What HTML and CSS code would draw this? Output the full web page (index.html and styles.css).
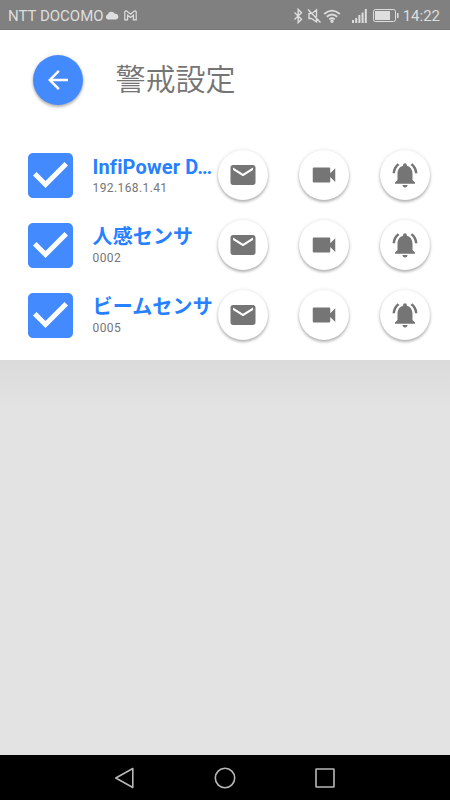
FILE: index.html
```html
<!DOCTYPE html>
<html lang="ja">
<head>
    <meta charset="UTF-8">
    <meta name="viewport" content="width=device-width, initial-scale=1.0">
    <title>警戒設定</title>
    <link rel="stylesheet" href="styles.css">
</head>
<body>
    <!-- Shared icons -->
    <svg class="icon-defs">
        <symbol id="icon-check" viewBox="3 3 18 18">
            <path d="M19 3H5c-1.11 0-2 .9-2 2v14c0 1.1.89 2 2 2h14c1.11 0 2-.9 2-2V5c0-1.1-.89-2-2-2zm-9 14l-5-5 1.41-1.41L10 14.17l7.59-7.59L19 8l-9 9z"/>
        </symbol>
        <symbol id="icon-mail" viewBox="0 0 24 24">
            <path d="M20 4H4c-1.1 0-1.99.9-1.99 2L2 18c0 1.1.9 2 2 2h16c1.1 0 2-.9 2-2V6c0-1.1-.9-2-2-2zm0 4l-8 5-8-5V6l8 5 8-5v2z"/>
        </symbol>
        <symbol id="icon-video" viewBox="0 0 24 24">
            <path d="M17 10.500V7c0-.55-.45-1-1-1H4c-.55 0-1 .45-1 1v10c0 .55.45 1 1 1h12c.55 0 1-.45 1-1v-3.500l4 4v-11l-4 4z"/>
        </symbol>
        <symbol id="icon-bell" viewBox="0 0 24 24">
            <path d="M7.580 4.080L6.150 2.650C3.750 4.480 2.170 7.300 2.030 10.500h2c.15-2.650 1.510-4.970 3.550-6.420zM19.970 10.500h2c-.15-3.200-1.730-6.020-4.120-7.850l-1.420 1.430c2.020 1.450 3.390 3.770 3.540 6.420zM18 11c0-3.070-1.640-5.640-4.500-6.320V4c0-.83-.67-1.500-1.500-1.500s-1.500.67-1.500 1.500v.68C7.630 5.360 6 7.920 6 11v5l-2 2v1h16v-1l-2-2v-5zM12 22c.14 0 .27-.01.4-.04.65-.14 1.180-.58 1.440-1.180.1-.24.15-.5.15-.78h-4c.01 1.100.9 2 2.010 2z"/>
        </symbol>
    </svg>

    <div class="status-bar">
        <span>NTT DOCOMO</span>
        <svg class="cloud" width="14" height="9" viewBox="0 0 14 9">
            <path d="M3 8.500A2.500 2.500 0 0 1 2.700 3.600 3.800 3.800 0 0 1 9.800 2.800 2.900 2.900 0 1 1 11 8.500z"/>
        </svg>
        <svg class="gmail" width="13" height="11" viewBox="0 0 13 11">
            <path d="M.8 1.600Q2 .2 3 1.300L6.500 4.200 10 1.300Q11 .2 12.200 1.600V9.800H9.400V5.200L6.500 7.500 3.600 5.200V9.800H.8z"/>
        </svg>
        <div class="status-right">
            <svg width="50" height="16" viewBox="0 0 50 16" class="line-icons">
                <path d="M2.500 4.500L9.500 11.300 6.200 14.600V1.400L9.500 4.700 2.500 11.500"/>
                <path d="M16 1.500L28.500 14.500M17 5V10.500H19.500L24.500 14V10.500M20.500 5L24.500 2V9M17 5.500H19.500"/>
                <path class="wifi" d="M32.200 6Q40 -.8 47.800 6M34.800 8.800Q40 4.300 45.200 8.800M37.300 11.400Q40 9.200 42.700 11.400"/>
                <circle cx="40" cy="13.200" r="1"/>
            </svg>
            <svg class="signal" width="15" height="14" viewBox="0 0 15 14">
                <path d="M0 11h2v3H0zM3.200 9h2v5h-2zM6.400 6h2v8h-2zM9.600 3.500h2V14h-2zM12.800 0h2v14h-2z"/>
            </svg>
            <svg class="battery" width="26" height="13" viewBox="0 0 26 13">
                <rect x=".5" y=".5" width="22" height="12" rx="2" class="battery-case"/>
                <path d="M2 2h15v9H2zM24 4h1.500v5H24z"/>
            </svg>
            <span>14:22</span>
        </div>
    </div>

    <main>
        <header>
            <button class="round-button back" aria-label="戻る">
                <svg viewBox="0 0 24 24"><path d="M20 11H7.830l5.590-5.590L12 4l-8 8 8 8 1.410-1.410L7.830 13H20v-2z"/></svg>
            </button>
            <h1>警戒設定</h1>
        </header>

        <div class="device">
            <svg class="checkbox"><use href="#icon-check"/></svg>
            <div class="device-info">
                <h2>InfiPower D…</h2>
                <p>192.168.1.41</p>
            </div>
            <div class="actions">
                <button class="round-button"><svg><use href="#icon-mail"/></svg></button>
                <button class="round-button"><svg><use href="#icon-video"/></svg></button>
                <button class="round-button"><svg><use href="#icon-bell"/></svg></button>
            </div>
        </div>
        <div class="device">
            <svg class="checkbox"><use href="#icon-check"/></svg>
            <div class="device-info">
                <h2>人感センサ</h2>
                <p>0002</p>
            </div>
            <div class="actions">
                <button class="round-button"><svg><use href="#icon-mail"/></svg></button>
                <button class="round-button"><svg><use href="#icon-video"/></svg></button>
                <button class="round-button"><svg><use href="#icon-bell"/></svg></button>
            </div>
        </div>
        <div class="device">
            <svg class="checkbox"><use href="#icon-check"/></svg>
            <div class="device-info">
                <h2>ビームセンサ</h2>
                <p>0005</p>
            </div>
            <div class="actions">
                <button class="round-button"><svg><use href="#icon-mail"/></svg></button>
                <button class="round-button"><svg><use href="#icon-video"/></svg></button>
                <button class="round-button"><svg><use href="#icon-bell"/></svg></button>
            </div>
        </div>
    </main>

    <nav class="nav-bar">
        <svg viewBox="0 0 24 24"><path d="M19.800 2.500V21.500L2.800 12z"/></svg>
        <svg viewBox="0 0 24 24"><circle cx="12" cy="12" r="9.700"/></svg>
        <svg viewBox="0 0 24 24"><rect x="3" y="3" width="18" height="18" rx=".5"/></svg>
    </nav>
</body>
</html>
```
FILE: styles.css
```css
* {
    box-sizing: border-box;
}
body {
    font-family: Roboto, "Noto Sans CJK JP", sans-serif;
    margin: 0;
    height: 100vh;
    display: flex;
    flex-direction: column;
    overflow: hidden;
    background-color: #e3e3e3;
}
h1, h2, p {
    margin: 0;
}
.icon-defs {
    display: none;
}
.status-bar {
    height: 30px;
    padding: 2px 10px 0 8px;
    flex: none;
    display: flex;
    align-items: center;
    background-color: #808080;
    border-bottom: 1px solid #757575;
    color: #dedede;
    fill: #dedede;
    font-size: 15px;
}
.cloud {
    margin: 0 0 1px 1px;
}
.gmail {
    margin-left: 5px;
    fill: none;
    stroke: #dedede;
    stroke-width: 1.2;
}
.status-right {
    margin-left: auto;
    display: flex;
    align-items: center;
}
.line-icons {
    fill: none;
    stroke: #dedede;
    stroke-width: 1.4;
}
.wifi {
    stroke-width: 1.8;
}
.signal {
    margin-left: 10px;
}
.battery {
    margin: 0 4px 0 6px;
}
.battery-case {
    fill: none;
    stroke: #dedede;
}
main {
    height: 330px;
    flex: none;
    background-color: white;
}
/* soft shade under the list */
main::after {
    content: "";
    display: block;
    height: 50px;
    margin-top: 10px;
    background: linear-gradient(#dbdbdb, #e3e3e3);
}
header {
    height: 110px;
    padding: 25px 32.5px 0;
    display: flex;
    align-items: flex-start;
    gap: 33px;
}
h1 {
    color: #757575;
    font-size: 30px;
    font-weight: 350;
    line-height: 50px;
}
.round-button {
    width: 50px;
    height: 50px;
    flex: none;
    padding: 0;
    display: flex;
    align-items: center;
    justify-content: center;
    border: none;
    border-radius: 50%;
    background-color: white;
    fill: #757575;
    box-shadow: 0 2px 3px rgba(0, 0, 0, 0.28), 0 0 4px rgba(0, 0, 0, 0.1);
}
.round-button svg {
    width: 30px;
    height: 30px;
}
.back {
    background-color: #448aff;
    fill: white;
}
.device {
    height: 70px;
    padding: 0 20px 0 27.5px;
    display: flex;
    align-items: center;
}
.checkbox {
    width: 45px;
    height: 45px;
    flex: none;
    fill: #448aff;
}
.device-info {
    width: 125px;
    padding-left: 20px;
    flex: none;
    white-space: nowrap;
}
h2 {
    color: #2680ff;
    font-size: 20px;
    font-weight: bold;
    line-height: 24px;
    letter-spacing: 0.15px;
}
p {
    padding-top: 1px;
    color: #757575;
    font-size: 12px;
    line-height: 16px;
    letter-spacing: 0.4px;
}
.actions {
    flex: 1;
    margin-left: 20px;
    display: flex;
    justify-content: space-between;
}
.nav-bar {
    height: 45px;
    margin-top: auto;
    display: flex;
    align-items: center;
    justify-content: center;
    gap: 76px;
    background-color: black;
}
.nav-bar svg {
    width: 24px;
    height: 24px;
    fill: none;
    stroke: #b8b8b8;
    stroke-width: 1.6;
    stroke-linejoin: round;
}
```
